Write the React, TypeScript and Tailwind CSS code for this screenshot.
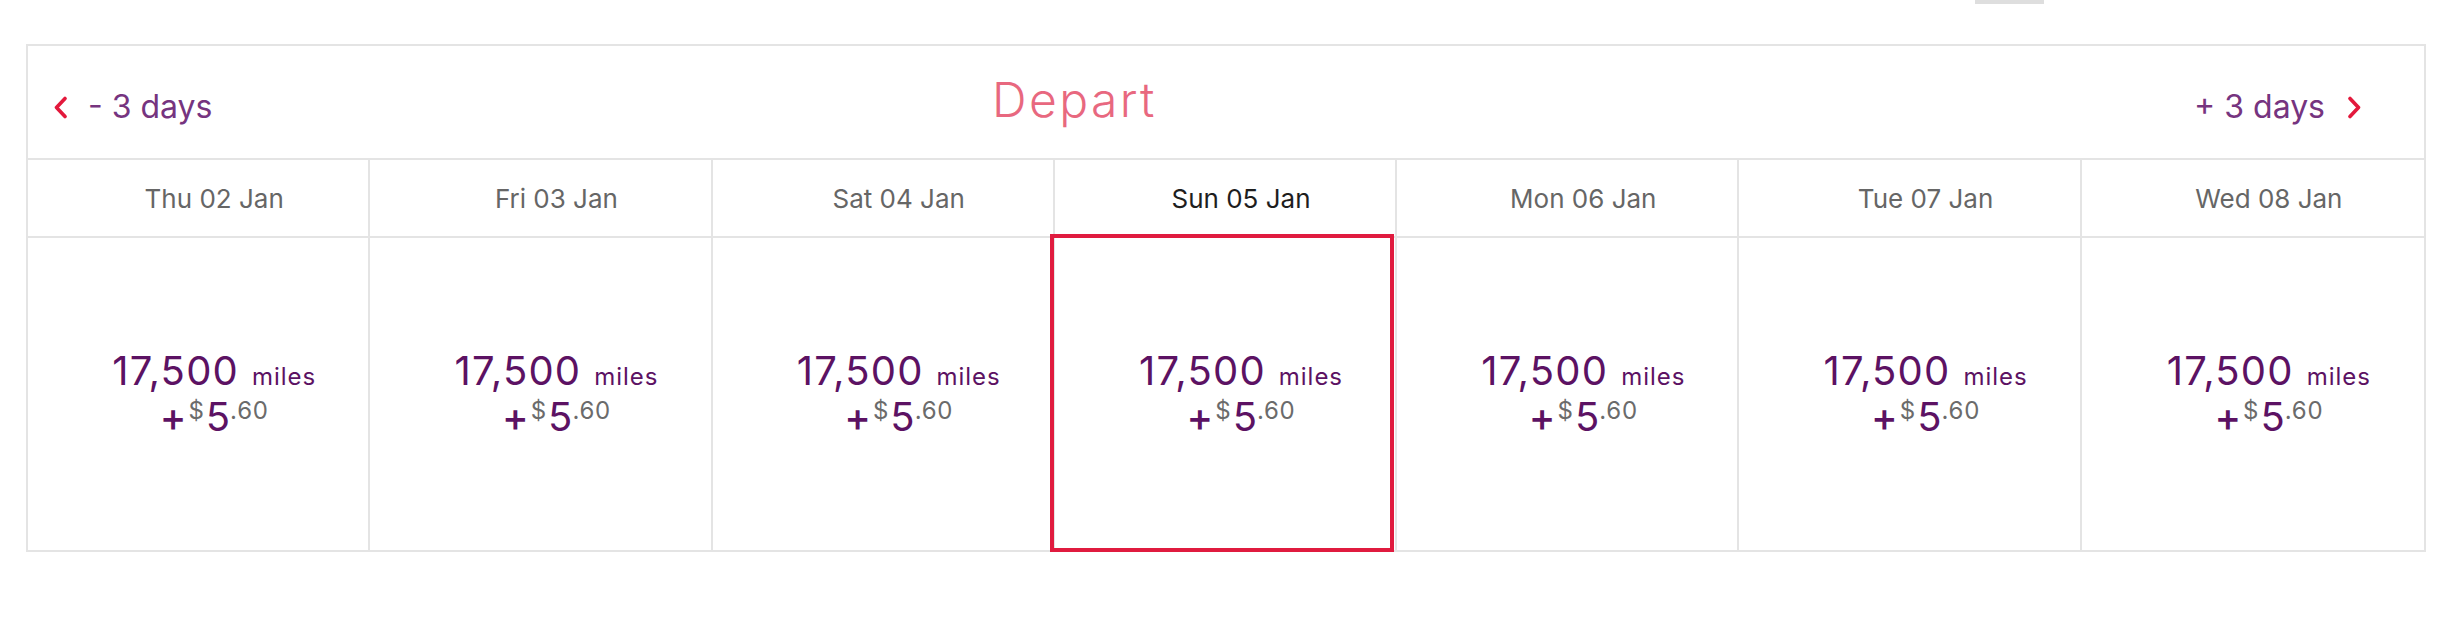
import React from 'react';

const days = [
    { label: 'Thu 02 Jan' },
    { label: 'Fri 03 Jan' },
    { label: 'Sat 04 Jan' },
    { label: 'Sun 05 Jan', selected: true },
    { label: 'Mon 06 Jan' },
    { label: 'Tue 07 Jan' },
    { label: 'Wed 08 Jan' },
];

function Chevron({ dir }: { dir: 'left' | 'right' }) {
    return (
        <svg width="15" height="23" viewBox="0 0 15 23" fill="none" stroke="#e3193c" strokeWidth="3.6" strokeLinecap="round" strokeLinejoin="round">
            {dir === 'left' ? <polyline points="12,2.5 3.5,11.5 12,20.5" /> : <polyline points="3,2.5 11.5,11.5 3,20.5" />}
        </svg>
    );
}

function Price() {
    return (
        <div className="flex flex-col items-center">
            <div className="flex items-baseline leading-none text-[#5c1263]">
                <span className="text-[40px] leading-none tracking-[0.03em]">17,500</span>
                <span className="ml-[13px] text-[24px] leading-none tracking-[0.04em]">miles</span>
            </div>
            <div className="mt-[6px] flex items-start leading-none">
                <span className="text-[40px] leading-none font-medium text-[#5c1263]">+</span>
                <span className="mt-[2px] ml-[2px] text-[24px] leading-none text-[#6b6b6b]">$</span>
                <span className="ml-[2px] text-[40px] leading-none text-[#5c1263]">5</span>
                <span className="mt-[2px] text-[24px] leading-none tracking-[0.03em] text-[#6b6b6b]">.60</span>
            </div>
        </div>
    );
}

export default function App() {
    return (
        <div className="w-[2460px] h-[644px] bg-white" style={{ fontFamily: 'Inter, "Open Sans", sans-serif' }}>
            <div className="flex h-[4px]">
                <div className="ml-[1975px] w-[69px] bg-[#dedede]" />
            </div>

            <div className="mt-[40px] ml-[26px] w-[2400px] border-2 border-[#e4e4e4]">
                {/* header */}
                <div className="flex items-start h-[114px] border-b-2 border-[#e4e4e4]">
                    <div className="w-[964px] pl-[25px] mt-[45px]">
                        <div className="flex items-center">
                            <Chevron dir="left" />
                            <span className="ml-[20px] text-[32px] leading-none text-[#76347f]">- 3 days</span>
                        </div>
                    </div>
                    <div className="mt-[30px] text-[48px] leading-none font-light tracking-[0.05em] text-[#e8687f]">Depart</div>
                    <div className="ml-auto pr-[62px] mt-[45px] flex items-center">
                        <span className="text-[32px] leading-none text-[#76347f]">+ 3 days</span>
                        <span className="ml-[22px]"><Chevron dir="right" /></span>
                    </div>
                </div>

                {/* dates */}
                <div className="grid grid-cols-7 h-[78px] border-b-2 border-[#e4e4e4]">
                    {days.map((d, i) => (
                        <div
                            key={d.label}
                            className={`flex items-center justify-center pl-8 text-[26px] ${i < 6 ? 'border-r-2 border-[#e4e4e4]' : ''} ${d.selected ? 'text-[#1e1e1e]' : 'text-[#666666]'}`}
                        >
                            {d.label}
                        </div>
                    ))}
                </div>

                {/* prices */}
                <div className="grid grid-cols-7 h-[312px]">
                    {days.map((d, i) => (
                        <div
                            key={d.label}
                            className={`relative flex items-center justify-center pl-8 ${i < 6 ? 'border-r-2 border-[#e4e4e4]' : ''}`}
                        >
                            <Price />
                            {d.selected && (
                                <div className="absolute -left-[5px] right-[1px] -top-[4px] -bottom-[2px] border-4 border-[#e01b3f]" />
                            )}
                        </div>
                    ))}
                </div>
            </div>
        </div>
    );
}
